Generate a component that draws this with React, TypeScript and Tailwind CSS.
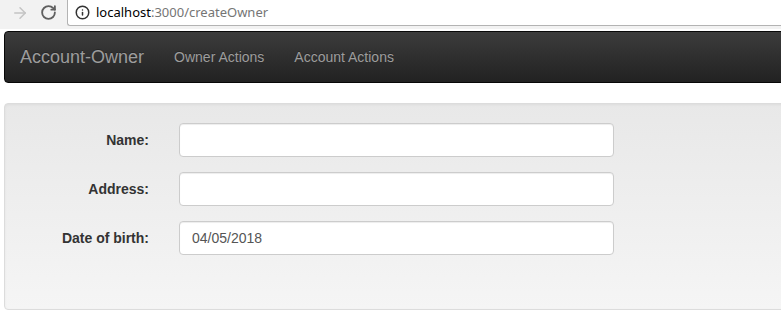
import { ArrowRight, RotateCw, Info } from 'lucide-react';

const fields = [
  { label: 'Name:', value: '' },
  { label: 'Address:', value: '' },
  { label: 'Date of birth:', value: '04/05/2018' },
];

function BrowserBar() {
  return (
    <div className="flex h-[29px] bg-[#f2f2f2]">
      <div className="flex w-[67px] shrink-0 items-start pt-[4px]">
        <ArrowRight className="ml-[11px] h-[18px] w-[18px] text-[#c4c4c4]" strokeWidth={2} />
        <RotateCw className="ml-[11px] h-[17px] w-[17px] text-[#5f5f5f]" strokeWidth={2.6} />
      </div>
      <div className="flex h-[26px] flex-1 items-center rounded-bl-[3px] border-b border-l border-[#b3b3b3] bg-white pl-[7px] font-['Noto_Sans',sans-serif] text-[13px]">
        <Info className="h-[15px] w-[15px] text-[#333]" strokeWidth={2.4} />
        <span className="ml-[6px] text-black">localhost</span>
        <span className="text-[#757575]">:3000/createOwner</span>
      </div>
    </div>
  );
}

function Navbar() {
  return (
    <nav className="mr-[-10px] flex h-[52px] items-center rounded-[4px] border border-[#080808] bg-gradient-to-b from-[#3c3c3c] to-[#222] text-[#9d9d9d] [text-shadow:0_-1px_0_rgba(0,0,0,0.25)]">
      <a className="px-[15px] text-[18px] leading-[20px]">Account-Owner</a>
      <a className="px-[15px] text-[14px] leading-[20px]">Owner Actions</a>
      <a className="px-[15px] text-[14px] leading-[20px]">Account Actions</a>
    </nav>
  );
}

export default function App() {
  return (
    <div className="h-[336px] w-[781px] overflow-hidden bg-white font-['Liberation_Sans',Arial,sans-serif] text-[14px] text-[#333]">
      <BrowserBar />
      <div className="pl-[4px] pt-[2px]">
        <Navbar />
        <div className="mr-[-10px] mt-[20px] h-[207px] rounded-[4px] border border-[#dcdcdc] bg-gradient-to-b from-[#e8e8e8] to-[#f5f5f5] p-[19px] shadow-[inset_0_1px_3px_rgba(0,0,0,0.05)]">
          <div className="grid grid-cols-[125px_435px] gap-x-[30px] gap-y-[15px]">
            {fields.map((f) => (
              <div key={f.label} className="contents">
                <label className="pt-[7px] text-right font-bold leading-[20px]">{f.label}</label>
                <input
                  readOnly
                  value={f.value}
                  className="h-[34px] rounded-[4px] border border-[#ccc] bg-white px-[12px] py-[6px] text-[14px] text-[#555] shadow-[inset_0_1px_1px_rgba(0,0,0,0.075)] outline-none"
                />
              </div>
            ))}
          </div>
        </div>
      </div>
    </div>
  );
}
